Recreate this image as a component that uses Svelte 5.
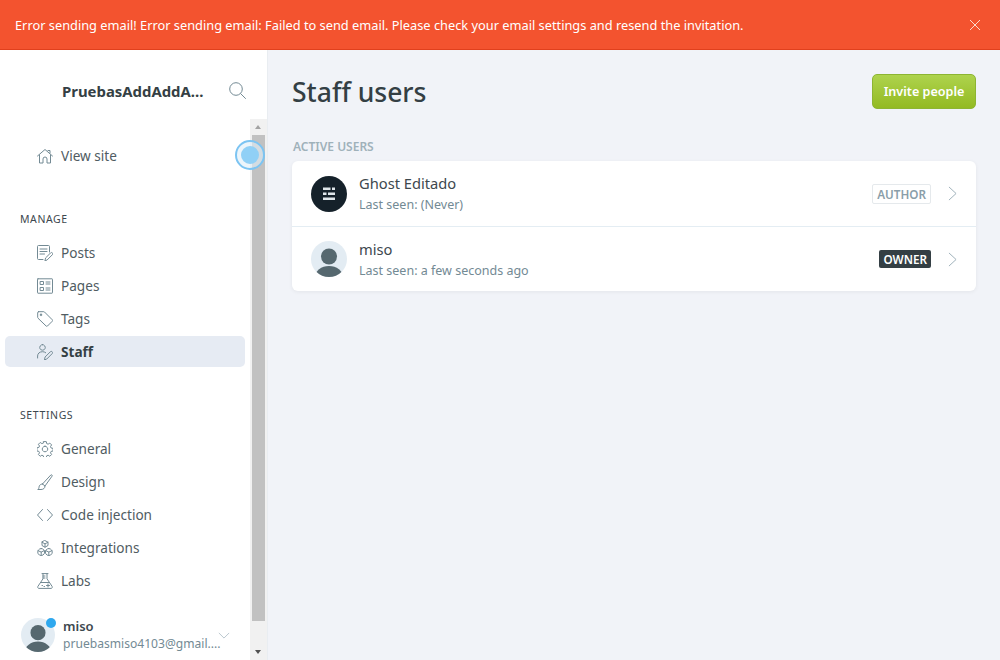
<script>
  const manage = [
    { label: 'Posts', icon: 'posts' },
    { label: 'Pages', icon: 'pages' },
    { label: 'Tags', icon: 'tags' },
    { label: 'Staff', icon: 'staff', active: true }
  ];
  const settings = [
    { label: 'General', icon: 'general' },
    { label: 'Design', icon: 'design' },
    { label: 'Code injection', icon: 'code' },
    { label: 'Integrations', icon: 'integrations' },
    { label: 'Labs', icon: 'labs' }
  ];
</script>

{#snippet icon(name)}
  <svg class="icon" viewBox="0 0 16 16" fill="none" stroke="#738a94" stroke-width="1" stroke-linecap="round" stroke-linejoin="round">
    {#if name === 'home'}
      <path d="M.5 8 8 1.500 15.500 8M2.500 7v8h3.500v-4a2 2 0 0 1 4 0v4h3.500V7M11 2.500h2V5" />
    {:else if name === 'posts'}
      <path d="M12.500 7V1.500a1 1 0 0 0-1-1h-10a1 1 0 0 0-1 1v12a1 1 0 0 0 1 1H6M3 4h7M3 6.500h7M3 9h4.500M8 15.500l.6-2.600 5-5a1.200 1.200 0 0 1 1.800 1.800l-5 5z" />
    {:else if name === 'pages'}
      <path d="M1 .8h14a.5.5 0 0 1 .5.5v13.400a.5.5 0 0 1-.5.5H1a.5.5 0 0 1-.5-.5V1.300a.5.5 0 0 1 .5-.5zM3.500 3.500h3v3h-3zM3.500 9.500h3v3h-3zM9 4h4M9 6h4M9 10h4M9 12h4" />
    {:else if name === 'tags'}
      <path d="M1.500.7h5.300a1 1 0 0 1 .7.3l7.800 7.800a1 1 0 0 1 0 1.400l-4.800 4.800a1 1 0 0 1-1.400 0L1 7.200a1 1 0 0 1-.3-.7V1.500a.8.800 0 0 1 .8-.8zM4 3.200a.8.800 0 1 0 .01 0z" />
    {:else if name === 'staff'}
      <path d="M5.500.6a2.800 2.800 0 1 1-.01 0zM.6 14V12c0-2.500 2-4.300 4.900-4.300 1.300 0 2.400.4 3.200 1M7.500 15.500l.6-2.500 5.200-5.200a1.300 1.300 0 0 1 1.900 1.800L10 14.800z" />
    {:else if name === 'general'}
      <path d="M6.700.6h2.600l.4 2 1.400.6 1.700-1.100 1.800 1.800-1.100 1.700.6 1.400 2 .4v2.600l-2 .4-.6 1.400 1.100 1.700-1.800 1.800-1.700-1.100-1.400.6-.4 2H6.700l-.4-2-1.400-.6-1.700 1.100-1.800-1.800 1.100-1.700-.6-1.400-2-.4V6.800l2-.4.6-1.400-1.100-1.700 1.800-1.800 1.700 1.100 1.400-.6zM8 5.200a2.800 2.800 0 1 0 .01 0z" />
    {:else if name === 'design'}
      <path d="M5.500 10 13.800 1c.7-.7 1.900.3 1.300 1.100L8 12M5.500 10l2.500 2c0 2-1.500 3.500-4 3.500H.8c1.500-1 1-2.300 1.500-3.500.4-1 1.700-2.200 3.200-2z" />
    {:else if name === 'code'}
      <path d="M5.500 2.500.5 8l5 5.500M10.500 2.500l5 5.500-5 5.500" />
    {:else if name === 'integrations'}
      <path d="M8 .6l3 1.600v3.300L8 7.200 5 5.500V2.200zM5 2.200 8 3.900l3-1.700M8 3.900v3.300M4.200 8.500a3.500 3.500 0 1 0 .01 0zM11.800 8.500a3.500 3.500 0 1 0 .01 0zM1 10.600l3.200 1.500 3-1.500M8.800 10.600l3 1.500 3.200-1.500M4.200 12.100v3.400M11.800 12.100v3.400" />
    {:else if name === 'labs'}
      <path d="M5 .6h6M6 .6v5.200L.9 13.400c-.6 1 .1 2 1.100 2h12c1 0 1.700-1 1.100-2L10 5.800V.6M6 3h2M6 5h2M3.800 9.500h8.400M9.500 12.500h3M11 11v3M5 12.500h.5M7 13.500h.5" />
    {/if}
  </svg>
{/snippet}

{#snippet avatar(cls)}
  <svg class={cls} viewBox="0 0 36 36">
    <circle cx="18" cy="18" r="18" fill="#e3ecf3" />
    <clipPath id={cls + '-clip'}><circle cx="18" cy="18" r="18" /></clipPath>
    <g clip-path={`url(#${cls}-clip)`} fill="#56686f">
      <circle cx="18" cy="15.500" r="8" />
      <ellipse cx="18" cy="36" rx="14" ry="11" />
    </g>
  </svg>
{/snippet}

{#snippet chevron()}
  <svg class="chev" viewBox="0 0 9 16" fill="none" stroke="#9baeb8" stroke-width="1"><path d="M.7 1 8.300 8 .7 15" /></svg>
{/snippet}

<div class="page">
  <div class="alert">
    <span>Error sending email! Error sending email: Failed to send email. Please check your email settings and resend the invitation.</span>
    <svg class="close" viewBox="0 0 12 12" stroke="#fbd9cd" stroke-width="1" fill="none"><path d="M1 1l10 10M11 1 1 11" /></svg>
  </div>

  <div class="body">
    <aside class="sidebar">
      <header class="head">
        <span class="site">PruebasAddAddA...</span>
        <svg class="search" viewBox="0 0 17 17" fill="none" stroke="#738a94" stroke-width="1"><circle cx="7" cy="7" r="6.300" /><path d="m11.700 11.700 4.800 4.800" stroke-linecap="round" /></svg>
      </header>

      <div class="scrollwrap">
        <nav class="nav">
          <ul class="top">
            <li class="item">{@render icon('home')}<span>View site</span></li>
          </ul>
          <h4 class="manage">MANAGE</h4>
          <ul>
            {#each manage as m}
              <li class="item" class:active={m.active}>{@render icon(m.icon)}<span>{m.label}</span></li>
            {/each}
          </ul>
          <h4 class="settings">SETTINGS</h4>
          <ul>
            {#each settings as s}
              <li class="item">{@render icon(s.icon)}<span>{s.label}</span></li>
            {/each}
          </ul>
          <div class="me">
            <div class="me-av">
              {@render avatar('av-me')}
              <i class="dot"></i>
            </div>
            <div class="me-text">
              <b>miso</b>
              <small>pruebasmiso4103@gmail....</small>
            </div>
            <svg class="down" viewBox="0 0 14 8" fill="none" stroke="#9baeb8" stroke-width="0.8"><path d="M1 1l6 6 6-6" /></svg>
          </div>
        </nav>
        <div class="scrollbar">
          <i class="arrow up"></i>
          <div class="thumb"></div>
          <i class="arrow dn"></i>
        </div>
        <div class="pulse"><i></i></div>
      </div>
    </aside>

    <main class="main">
      <div class="title">
        <h1>Staff users</h1>
        <button class="invite">Invite people</button>
      </div>
      <h5 class="section">ACTIVE USERS</h5>
      <div class="card">
        <div class="row">
          <svg class="uav" viewBox="0 0 36 36">
            <circle cx="18" cy="18" r="18" fill="#15212a" />
            <g fill="#dfe6ea">
              <rect x="12" y="11.500" width="7.500" height="2.500" /><rect x="21" y="11.500" width="3" height="2.500" />
              <rect x="12" y="16.500" width="3.500" height="2.500" /><rect x="17" y="16.500" width="7" height="2.500" />
              <rect x="12" y="21.500" width="12" height="2.500" />
            </g>
          </svg>
          <div class="utext"><b>Ghost Editado</b><small>Last seen: (Never)</small></div>
          <span class="badge author">AUTHOR</span>
          {@render chevron()}
        </div>
        <div class="row">
          {@render avatar('uav')}
          <div class="utext"><b>miso</b><small>Last seen: a few seconds ago</small></div>
          <span class="badge owner">OWNER</span>
          {@render chevron()}
        </div>
      </div>
    </main>
  </div>
</div>

<style>
  :global(body) { margin: 0; }
  .page {
    width: 1000px; height: 660px; overflow: hidden; display: flex; flex-direction: column;
    font-family: "Noto Sans", "Open Sans", sans-serif; color: #3d484e; background: #f1f3f8;
  }
  .alert {
    height: 49px; flex: none; background: #f3532f; border-bottom: 1px solid #e0401d;
    display: flex; align-items: center; justify-content: space-between;
    padding: 0 19px 0 15px; color: #fff; font-size: 12.8px;
  }
  .close { width: 12px; height: 12px; }
  .body { flex: 1; display: flex; min-height: 0; }
  .sidebar {
    width: 267px; flex: none; background: #fff; border-right: 1px solid #e9edf1;
    display: flex; flex-direction: column; min-height: 0;
  }
  .head { height: 69px; flex: none; display: flex; align-items: center; padding: 24px 21px 12px 62px; box-sizing: border-box; justify-content: space-between; }
  .site { font-size: 14.9px; font-weight: 700; color: #343f44; }
  .search { width: 17px; height: 17px; }
  .scrollwrap { flex: 1; position: relative; display: flex; min-height: 0; }
  .nav { flex: 1; min-width: 0; padding-left: 5px; padding-right: 5px; }
  ul { list-style: none; margin: 0; padding: 0; }
  .top { padding-top: 21px; }
  .item {
    height: 31px; margin-bottom: 2px; display: flex; align-items: center; gap: 8px; padding-left: 32px;
    font-size: 13.6px; color: #505c62; border-radius: 5px;
  }
  .item.active { background: #e6ebf3; color: #343f44; font-weight: 700; }
  .icon { width: 16px; height: 16px; flex: none; }
  h4 { margin: 0; padding-left: 15px; font-size: 10.5px; font-weight: 400; letter-spacing: 0.6px; color: #3d484e; line-height: 14px; }
  .manage { padding-top: 39px; padding-bottom: 11px; }
  .settings { padding-top: 39px; padding-bottom: 11px; }
  .me { display: flex; align-items: flex-start; margin-top: 22px; padding-left: 16px; }
  .me-av { position: relative; width: 34px; height: 34px; flex: none; margin-right: 8px; }
  :global(.av-me) { width: 34px; height: 34px; display: block; }
  .dot { position: absolute; top: 0; right: -1px; width: 10px; height: 10px; border-radius: 50%; background: #2fa8ee; }
  .me-text { display: flex; flex-direction: column; min-width: 0; width: 157px; }
  .me-text b { font-size: 13px; font-weight: 600; line-height: 17px; color: #3d484e; }
  .me-text small { font-size: 12.1px; line-height: 17px; color: #738a94; white-space: nowrap; }
  .down { width: 12px; height: 7px; margin-top: 14px; margin-left: -2px; flex: none; }
  .scrollbar {
    width: 17px; flex: none; background: #f1f1f1; display: flex; flex-direction: column; align-items: center;
  }
  .thumb { width: 13px; flex: 1; background: #c1c1c1; margin-bottom: 23px; }
  .arrow { height: 16px; width: 17px; position: relative; flex: none; }
  .arrow::after { content: ""; position: absolute; left: 5px; top: 6px; border: 3.500px solid transparent; }
  .arrow.up::after { border-bottom: 4px solid #a3a3a3; border-top: 0; }
  .arrow.dn::after { border-top: 4px solid #505050; border-bottom: 0; }
  .pulse {
    position: absolute; left: 235px; top: 21px; width: 30px; height: 30px; border-radius: 50%;
    box-sizing: border-box; border: 2px solid #7cc4f2; background: rgba(224, 238, 248, 0.6);
    display: flex; align-items: center; justify-content: center;
  }
  .pulse i { width: 18px; height: 18px; border-radius: 50%; background: #90d0f6; }
  .main { flex: 1; padding: 0 24px 0 24px; min-width: 0; }
  .title { display: flex; justify-content: space-between; align-items: center; height: 35px; margin-top: 24px; }
  h1 { margin: 2px 0 0; font-size: 26.5px; font-weight: 500; color: #343f44; line-height: 35px; }
  .invite {
    width: 104px; height: 35px; border-radius: 5px; border: 1px solid #8db532; color: #fff; font: 600 12.6px "Noto Sans", sans-serif;
    background: linear-gradient(#aed34d, #93ba22); padding: 0;
  }
  .section { margin: 30px 0 0 1px; font-size: 12px; font-weight: 600; color: #9fb1ba; line-height: 16px; }
  .card { margin-top: 6px; background: #fff; border-radius: 6px; box-shadow: 0 1px 4px rgba(0, 0, 0, 0.06); }
  .row { height: 65px; box-sizing: border-box; display: flex; align-items: center; padding: 0 19px; }
  .row + .row { border-top: 1px solid #e4edf3; }
  .uav, :global(.uav) { width: 36px; height: 36px; flex: none; margin-right: 12px; }
  .utext { flex: 1; display: flex; flex-direction: column; gap: 3px; }
  .utext b { font-size: 14.7px; font-weight: 400; color: #3d484e; line-height: 19px; }
  .utext small { font-size: 12.5px; color: #738a94; line-height: 17px; }
  .badge { font-size: 11.7px; font-weight: 600; border-radius: 2px; margin-right: 17px; box-sizing: border-box; }
  .author { color: #8a9ea9; border: 1px solid #e5e9ec; height: 20px; line-height: 18px; padding: 0 4px; }
  .owner { color: #fff; background: #343f44; height: 18px; line-height: 18px; padding: 0 4px; }
  .chev { width: 9px; height: 15px; flex: none; }
</style>
